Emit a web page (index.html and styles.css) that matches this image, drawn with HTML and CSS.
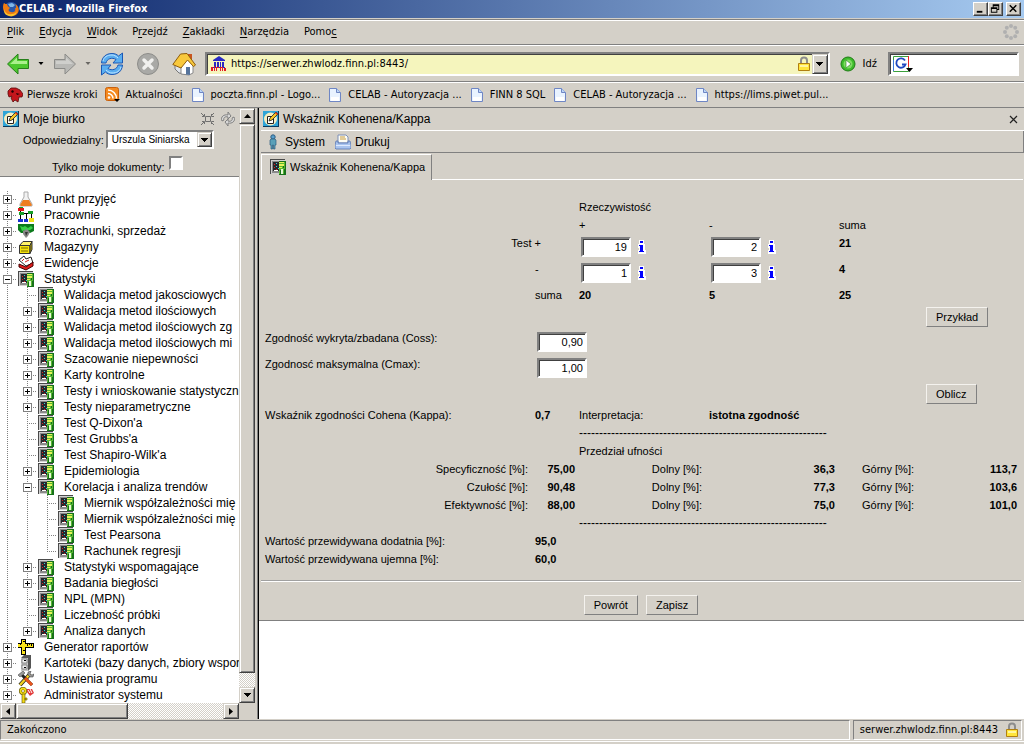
FILE: index.html
```html
<!DOCTYPE html>
<html lang="pl">
<head>
<meta charset="utf-8">
<title>CELAB - Mozilla Firefox</title>
<link rel="stylesheet" href="styles.css">
</head>
<body>
<svg class="sprite" aria-hidden="true">
  <symbol id="stat" viewBox="0 0 16 16" shape-rendering="crispEdges">
    <path fill="#4a4a4a" d="M0 0h15v1H0zM0 0h1v15H0z"/><path fill="#d0d0d0" d="M1 1h14v14H1z"/><path fill="#8a8a8a" d="M2 2h12v12H2z"/><path fill="#26282c" d="M3 3h6v9H3z"/>
    <path fill="#d22" d="M4 5h1v1H4zM4 8h1v1H4zM6 10h1v1H6z"/><path fill="#3bd0d8" d="M6 4h1v1H6zM6 7h1v1H6zM8 9h1v1H8z"/>
    <path fill="#fff" d="M4 11h4v1H4z"/><path fill="#17701b" d="M9 2h7v14H9z"/><path fill="#58b832" d="M9 3h6v12H9z"/>
    <path fill="#e6f25a" d="M9 3h5v1H9zM9 5h5v2H9zM9 8h3v1H9z"/><path fill="#e8f8d8" d="M11 10h2v5h-2z"/><path fill="#17701b" d="M13 7h1v2h-1zM14 10h1v5h-1zM10 11h1v4h-1z"/>
  </symbol>
  <symbol id="edit" viewBox="0 0 16 16">
    <path fill="#0a3a5c" d="M0 0h16v16H0z"/><path fill="#2fa5d8" d="M0 0h15v15H0z"/><circle cx="7.500" cy="8" r="6.500" fill="#f6edc0"/><path fill="#fff" stroke="#222" d="M4.500 5.500h6v7h-6z"/>
    <path d="M6 10l1-3 6-6 2 2-6 6z" fill="#f7c520" stroke="#222" stroke-width=".8"/><path d="M13 1l2 2-1 1-2-2z" fill="#d32"/>
  </symbol>
  <symbol id="page" viewBox="0 0 14 16">
    <path d="M1.500 1.500h7l4 4v9h-11z" fill="#e9f3ff" stroke="#6f86c4"/><path d="M8.500 1.500v4h4" fill="#bcd6f7" stroke="#6f86c4"/><path d="M3 10h8v4H3z" fill="#fff"/>
  </symbol>
  <symbol id="lock" viewBox="0 0 14 16">
    <path d="M4 8V4.500a3 3 0 0 1 6 0V8" fill="none" stroke="#8d8d8d" stroke-width="2"/><path d="M1.500 7.500h11v7h-11z" fill="#ffe53b" stroke="#b07f10"/><path d="M3 9h8v2H3z" fill="#fff6a0"/>
  </symbol>
  <symbol id="info" viewBox="0 0 8 14" shape-rendering="crispEdges"><path d="M1 0h5v4h1v6h1v4H0v-4h1V8H0V4h1z" fill="#fff"/><path d="M2 1h3v2H2zM1 5h4v6h1v1H1v-1h1V6H1z" fill="#00f"/></symbol>
  <symbol id="plus" viewBox="0 0 9 9" shape-rendering="crispEdges"><path fill="#808080" d="M0 0h9v9H0z"/><path fill="#fff" d="M1 1h7v7H1z"/><path d="M2 4h5v1H2zM4 2h1v5H4z"/></symbol>
  <symbol id="minus" viewBox="0 0 9 9" shape-rendering="crispEdges"><path fill="#808080" d="M0 0h9v9H0z"/><path fill="#fff" d="M1 1h7v7H1z"/><path d="M2 4h5v1H2z"/></symbol>
  <symbol id="down" viewBox="0 0 7 4" shape-rendering="crispEdges"><path d="M0 0h7v1H0zM1 1h5v1H1zM2 2h3v1H2zM3 3h1v1H3z"/></symbol>
</svg>

<header class="titlebar">
  <svg class="i16" viewBox="0 0 16 16"><circle cx="8" cy="8" r="7" fill="#2b57a8"/><path d="M5 3l4-1 3 2-2 2-3 0z" fill="#7fb6e8"/><path d="M1 2c1 1 2 1 3 1 0 2 2 3 3 4-2 1-2 4 1 4 3 1 5-1 4-4 2 1 1-3 0-4 4 2 5 7 2 10s-9 3-12-1S0 4 1 2z" fill="#ee7a12"/><path d="M1 8c1 4 4 6 8 5 3 0 5-2 5-4 0 5-4 7-8 6S1 12 1 8z" fill="#fbc22a"/></svg>
  <h1>CELAB - Mozilla Firefox</h1>
  <button class="win" aria-label="Minimalizuj"><svg viewBox="0 0 14 12"><path d="M3 8h6v2H3z"/></svg></button>
  <button class="win" aria-label="Przywróć"><svg viewBox="0 0 14 12"><path d="M4 1h7v6H9V6h1V3H5v1H4zM2 4h7v6H2zM3 6v3h5V6z" fill-rule="evenodd"/></svg></button>
  <button class="win close" aria-label="Zamknij"><svg viewBox="0 0 14 12"><path d="M3 2l7 7M10 2l-7 7" stroke="#000" stroke-width="1.600"/></svg></button>
</header>

<nav class="menubar">
  <a href="#"><u>P</u>lik</a><a href="#"><u>E</u>dycja</a><a href="#"><u>W</u>idok</a><a href="#">P<u>r</u>zejdź</a><a href="#"><u>Z</u>akładki</a><a href="#"><u>N</u>arzędzia</a><a href="#">Pomo<u>c</u></a>
  <svg class="throbber" viewBox="0 0 16 16" fill="#b0b0b0"><circle cx="8" cy="2" r="2"/><circle cx="12.200" cy="3.800" r="2"/><circle cx="14" cy="8" r="2"/><circle cx="12.200" cy="12.200" r="2"/><circle cx="8" cy="14" r="2"/><circle cx="3.800" cy="12.200" r="2"/><circle cx="2" cy="8" r="2"/><circle cx="3.800" cy="3.800" r="2"/></svg>
</nav>

<div class="toolbar">
  <button class="tool" aria-label="Wstecz"><svg class="i24" viewBox="0 0 24 24"><path d="M1.500 12L12 2v5.500h10.500v9H12V22z" fill="#4cc82e" stroke="#267f1a" stroke-linejoin="round"/><path d="M4 12l7-6.500V9h10v3z" fill="#aaf08c"/></svg></button>
  <svg class="caret" viewBox="0 0 5 3"><path d="M0 0h5L2.500 3z"/></svg>
  <button class="tool fwd" aria-label="Do przodu"><svg class="i24" viewBox="0 0 24 24"><path d="M22.500 12L12 2v5.500H1.500v9H12V22z" fill="#b9b9b6" stroke="#8b8b88" stroke-linejoin="round"/><path d="M20 12l-7-6.500V9H3v3z" fill="#cfcfcc"/></svg></button>
  <svg class="caret dim" viewBox="0 0 5 3"><path d="M0 0h5L2.500 3z"/></svg>
  <button class="tool" aria-label="Odśwież"><svg class="i24" viewBox="0 0 24 24"><path d="M1.500 11C2 5 6 1.500 12 1.500c3 0 5 1 6.500 2.500L22.500 1v10H13l3-3.500C12 5 7 6.500 6 11z" fill="#5aaef0" stroke="#1c58b4"/><path d="M3 9c1-4 4-6 9-6 2 0 4 1 6 3" fill="none" stroke="#bfe4ff"/><path d="M22.500 13C22 19 18 22.500 12 22.500c-3 0-5-1-6.500-2.500L1.500 23V13H11l-3 3.500c4 2.500 9 1 10-3.500z" fill="#5aaef0" stroke="#1c58b4"/><path d="M21 15c-1 4-4 6-9 6-2 0-4-1-6-3" fill="none" stroke="#bfe4ff"/></svg></button>
  <button class="tool stop" aria-label="Zatrzymaj"><svg class="i24" viewBox="0 0 24 24"><circle cx="12" cy="12" r="10.500" fill="#a9a9a6" stroke="#8c8c89"/><path d="M8 8l8 8M16 8l-8 8" stroke="#f0f0ee" stroke-width="3.500" stroke-linecap="round"/></svg></button>
  <button class="tool stop" aria-label="Strona startowa"><svg class="i24" viewBox="0 0 24 24"><path d="M3 12l5-6 5 7v9l-6-1-4-4z" fill="#dfe3ea" stroke="#777"/><path d="M16 2h4v6h-4z" fill="#c9551f"/><path d="M9 22V13l6-6 6 6v8l-4 2z" fill="#fff" stroke="#888"/><path d="M.8 12.500L8.500 2l6.500-.5L23.500 13l-2 1.500L15.500 8 9 16z" fill="#f8c83c" stroke="#8d5c0c" stroke-linejoin="round"/><path d="M14 15h4v8l-4-.5z" fill="#56749c"/></svg></button>
  <div class="urlbar">
    <svg class="i16" viewBox="0 0 16 16"><path d="M2 4l6-4 6 4v1H2zM3 6h2v5H3zM6 6h2v5H6zM9 6h1v5H9zM11 6h2v5h-2zM2 11h12v1H2z" fill="#2a2bc4"/><path d="M0 11h2v4H0zM3 10h1v5H3zM5 11h3v1H6v3H5zM9 11h3v4h-1v-3h-1v3H9zM13 12h2v3h-2z" fill="#e31b23"/></svg>
    <input type="text" aria-label="Adres" value="https://serwer.zhwlodz.finn.pl:8443/">
    <svg class="lock" viewBox="0 0 14 16"><use href="#lock"/></svg>
    <button class="raised drop" aria-label="Historia adresów"><svg class="arr" viewBox="0 0 7 4"><use href="#down"/></svg></button>
  </div>
  <button class="go"><svg class="i16" viewBox="0 0 16 16"><circle cx="8" cy="8" r="7" fill="#3dbb2c" stroke="#1f7c16"/><circle cx="8" cy="8" r="4.500" fill="#7fdc62"/><path d="M6 4l5 4-5 4z" fill="#fff" stroke="#1f7c16" stroke-width=".6"/></svg><span>Idź</span></button>
  <div class="search">
    <svg viewBox="0 0 22 18"><path d="M1.500 1.500h15v15h-15z" fill="#fff" stroke="#3ba03b"/><path d="M16.500 1v11" stroke="#e22"/><path d="M1.500 16V5" stroke="#3b78d8" fill="none"/><path d="M13 5.500A4.700 4.700 0 1 0 13.500 9.500H10" fill="none" stroke="#2149c0" stroke-width="1.800"/><path d="M14 13h7l-3.500 4z"/></svg>
    <input type="text" aria-label="Szukaj">
  </div>
</div>

<nav class="bookmarks">
  <a href="#"><svg class="i16" viewBox="0 0 16 16"><path d="M1 4l3-3 5 0 4 2 3 4-1 3-3 0-1 5-3-2-2 2-2-4 1-2-3 1-1-3z" fill="#c4161c" stroke="#5a0a0a" stroke-width=".8"/><path d="M4 4l2-1 1 2-2 1zM9 6l4 1-3 1z" fill="#200"/></svg>Pierwsze kroki</a>
  <a href="#"><svg class="i16" viewBox="0 0 16 16"><rect x=".5" y=".5" width="13" height="13" rx="2" fill="#f58a1f" stroke="#c9600c"/><circle cx="4" cy="10.500" r="1.300" fill="#fff"/><path d="M3 6.500a5 5 0 0 1 5 5M3 3a8.500 8.500 0 0 1 8.500 8.500" fill="none" stroke="#fff" stroke-width="1.500"/><path d="M9 12h6l-3 3z"/></svg>Aktualności</a>
  <a href="#"><svg class="pg"><use href="#page"/></svg>poczta.finn.pl - Logo...</a>
  <a href="#"><svg class="pg"><use href="#page"/></svg>CELAB - Autoryzacja ...</a>
  <a href="#"><svg class="pg"><use href="#page"/></svg>FINN 8 SQL</a>
  <a href="#"><svg class="pg"><use href="#page"/></svg>CELAB - Autoryzacja ...</a>
  <a href="#"><svg class="pg"><use href="#page"/></svg>https://lims.piwet.pul...</a>
</nav>

<div class="frames">
  <aside class="side">
    <div class="side-body">
      <form class="desk">
        <div class="desk-title"><svg class="i16"><use href="#edit"/></svg><h2>Moje biurko</h2>
          <svg class="i16 g" viewBox="0 0 16 16" fill="none" stroke="#707070"><path d="M5.500 5.500h5v5h-5zM1 2l3 3M14 2l-3 3M1 14l3-3M14 14l-3-3M2 5.500h2.500V3M14 5.500h-2.500V3M2 10.500h2.500V13M14 10.500h-2.500V13"/></svg>
          <svg class="i16 g" viewBox="0 0 16 16" fill="#d8d8d8" stroke="#808080"><path d="M2 10c-2-4 2-7 6-6V1l3 4-3 3V6C5 5 3 7 4 9zM14 6c2 4-2 7-6 6v3l-3-4 3-3v2c3 1 5-1 4-3z"/></svg>
        </div>
        <div class="desk-row"><label for="who">Odpowiedzialny:</label><span class="sel"><select id="who"><option>Urszula Siniarska</option></select><span class="raised selbtn"><svg class="arr" viewBox="0 0 7 4"><use href="#down"/></svg></span></span></div>
        <div class="desk-row check"><label for="mine">Tylko moje dokumenty:</label><input type="checkbox" id="mine"></div>
      </form>
      <ul class="tree">
        <li><div class="row"><span class="twig"><button aria-label="Rozwiń"><svg><use href="#plus"/></svg></button></span><svg class="i16" viewBox="0 0 16 16"><path d="M6 1h4v5l4 7v2H2v-2l4-7z" fill="#f2f2f2" stroke="#aaa"/><path d="M5 9h6l3 5-1 1H3l-1-1z" fill="#ee7e22"/></svg><a href="#">Punkt przyjęć</a></div></li>
        <li><div class="row"><span class="twig"><button aria-label="Rozwiń"><svg><use href="#plus"/></svg></button></span><svg class="i16" viewBox="0 0 16 16" shape-rendering="crispEdges"><path d="M2 3h1v9H2zM3 6h10v1H3zM8 6h1v6H8zM13 6h1v6h-1z"/><path d="M0 1h6v3H0z" fill="#e01818"/><path d="M1 0h4v1H1zM1 5h5v3H1zM10 4h5v3h-5z" fill="#18a028"/><path d="M0 12h5v3H0zM6 12h4v3H6z" fill="#1830d0"/><path d="M11 11h5v4h-5z" fill="#f0e018"/></svg><a href="#">Pracownie</a></div></li>
        <li><div class="row"><span class="twig"><button aria-label="Rozwiń"><svg><use href="#plus"/></svg></button></span><svg class="i16" viewBox="0 0 16 16"><path d="M0 1h16v7l-4 2H3L0 7z" fill="#0c7a1c"/><path d="M2 3l3 1 2-1 3 2 3-2 2 2-3 2-4 0-4 1z" fill="#39d048"/><path d="M5 8l4-2 3 3-2 4-2 2-3-4z" fill="#888"/><path d="M7 9l3 0-2 4z" fill="#333"/></svg><a href="#">Rozrachunki, sprzedaż</a></div></li>
        <li><div class="row"><span class="twig"><button aria-label="Rozwiń"><svg><use href="#plus"/></svg></button></span><svg class="i16" viewBox="0 0 16 16"><path d="M1.500 6.500L5 2.500h9l-2 4z" fill="#fff36a" stroke="#333"/><path d="M1.500 6.500H12v8H1.500z" fill="#f6e40c" stroke="#333"/><path d="M12 6.500l2-4v8l-2 4z" fill="#b09c04" stroke="#333"/><path d="M3 9h7M3 12h7" stroke="#7a6c00"/></svg><a href="#">Magazyny</a></div></li>
        <li><div class="row"><span class="twig"><button aria-label="Rozwiń"><svg><use href="#plus"/></svg></button></span><svg class="i16" viewBox="0 0 16 16"><path d="M1 5l5-4 2 3 5-2 2 6-7 3z" fill="#fff" stroke="#222"/><path d="M4 6l2-2M7 7l4-2" stroke="#c22"/><path d="M1 9l7 3 7-5v4l-7 4-7-3z" fill="#e01c1c" stroke="#400"/></svg><a href="#">Ewidencje</a></div></li>
        <li><div class="row"><span class="twig"><button aria-label="Zwiń"><svg><use href="#minus"/></svg></button></span><svg class="i16"><use href="#stat"/></svg><a href="#">Statystyki</a></div>
          <ul>
            <li><div class="row"><span class="twig"></span><svg class="i16"><use href="#stat"/></svg><a href="#">Walidacja metod jakosciowych</a></div></li>
            <li><div class="row"><span class="twig"><button aria-label="Rozwiń"><svg><use href="#plus"/></svg></button></span><svg class="i16"><use href="#stat"/></svg><a href="#">Walidacja metod ilościowych</a></div></li>
            <li><div class="row"><span class="twig"><button aria-label="Rozwiń"><svg><use href="#plus"/></svg></button></span><svg class="i16"><use href="#stat"/></svg><a href="#">Walidacja metod ilościowych zg</a></div></li>
            <li><div class="row"><span class="twig"><button aria-label="Rozwiń"><svg><use href="#plus"/></svg></button></span><svg class="i16"><use href="#stat"/></svg><a href="#">Walidacja metod ilościowych mi</a></div></li>
            <li><div class="row"><span class="twig"><button aria-label="Rozwiń"><svg><use href="#plus"/></svg></button></span><svg class="i16"><use href="#stat"/></svg><a href="#">Szacowanie niepewności</a></div></li>
            <li><div class="row"><span class="twig"><button aria-label="Rozwiń"><svg><use href="#plus"/></svg></button></span><svg class="i16"><use href="#stat"/></svg><a href="#">Karty kontrolne</a></div></li>
            <li><div class="row"><span class="twig"><button aria-label="Rozwiń"><svg><use href="#plus"/></svg></button></span><svg class="i16"><use href="#stat"/></svg><a href="#">Testy i wnioskowanie statystyczn</a></div></li>
            <li><div class="row"><span class="twig"><button aria-label="Rozwiń"><svg><use href="#plus"/></svg></button></span><svg class="i16"><use href="#stat"/></svg><a href="#">Testy nieparametryczne</a></div></li>
            <li><div class="row"><span class="twig"></span><svg class="i16"><use href="#stat"/></svg><a href="#">Test Q-Dixon'a</a></div></li>
            <li><div class="row"><span class="twig"></span><svg class="i16"><use href="#stat"/></svg><a href="#">Test Grubbs'a</a></div></li>
            <li><div class="row"><span class="twig"></span><svg class="i16"><use href="#stat"/></svg><a href="#">Test Shapiro-Wilk'a</a></div></li>
            <li><div class="row"><span class="twig"><button aria-label="Rozwiń"><svg><use href="#plus"/></svg></button></span><svg class="i16"><use href="#stat"/></svg><a href="#">Epidemiologia</a></div></li>
            <li><div class="row"><span class="twig"><button aria-label="Zwiń"><svg><use href="#minus"/></svg></button></span><svg class="i16"><use href="#stat"/></svg><a href="#">Korelacja i analiza trendów</a></div>
              <ul>
                <li><div class="row"><span class="twig"></span><svg class="i16"><use href="#stat"/></svg><a href="#">Miernik współzależności mię</a></div></li>
                <li><div class="row"><span class="twig"></span><svg class="i16"><use href="#stat"/></svg><a href="#">Miernik współzależności mię</a></div></li>
                <li><div class="row"><span class="twig"></span><svg class="i16"><use href="#stat"/></svg><a href="#">Test Pearsona</a></div></li>
                <li><div class="row"><span class="twig last"></span><svg class="i16"><use href="#stat"/></svg><a href="#">Rachunek regresji</a></div></li>
              </ul>
            </li>
            <li><div class="row"><span class="twig"><button aria-label="Rozwiń"><svg><use href="#plus"/></svg></button></span><svg class="i16"><use href="#stat"/></svg><a href="#">Statystyki wspomagające</a></div></li>
            <li><div class="row"><span class="twig"><button aria-label="Rozwiń"><svg><use href="#plus"/></svg></button></span><svg class="i16"><use href="#stat"/></svg><a href="#">Badania biegłości</a></div></li>
            <li><div class="row"><span class="twig"></span><svg class="i16"><use href="#stat"/></svg><a href="#">NPL (MPN)</a></div></li>
            <li><div class="row"><span class="twig"></span><svg class="i16"><use href="#stat"/></svg><a href="#">Liczebność próbki</a></div></li>
            <li><div class="row"><span class="twig last"><button aria-label="Rozwiń"><svg><use href="#plus"/></svg></button></span><svg class="i16"><use href="#stat"/></svg><a href="#">Analiza danych</a></div></li>
          </ul>
        </li>
        <li><div class="row"><span class="twig"><button aria-label="Rozwiń"><svg><use href="#plus"/></svg></button></span><svg class="i16" viewBox="0 0 16 16" shape-rendering="crispEdges"><path d="M3 0h5v16H3zM0 4h16v5H0z"/><path d="M4 1h3v14H4zM0 5h15v3H0z" fill="#fbe41a"/><path d="M2 5h1v1H2zM9 5h1v2H9zM11 5h1v1h-1zM13 5h1v2h-1zM5 11h2v1H5zM5 2h2v1H5z"/></svg><a href="#">Generator raportów</a></div></li>
        <li><div class="row"><span class="twig"><button aria-label="Rozwiń"><svg><use href="#plus"/></svg></button></span><svg class="i16" viewBox="0 0 16 16"><path d="M3 3l3-3h7v13l-3 3H3z" fill="#555"/><path d="M3 3h7v13H3z" fill="#c6c6c6"/><path d="M4 4h5v4H4zM4 10h5v4H4z" fill="#eee" stroke="#666" stroke-width=".7"/><path d="M6 5h2v1H6zM6 12h2v1H6z"/></svg><a href="#">Kartoteki (bazy danych, zbiory wspor</a></div></li>
        <li><div class="row"><span class="twig"><button aria-label="Rozwiń"><svg><use href="#plus"/></svg></button></span><svg class="i16" viewBox="0 0 16 16"><path d="M2 14L12 3" stroke="#222" stroke-width="4"/><path d="M2 14L12 3" stroke="#f0d020" stroke-width="2.500"/><path d="M4 4l10 10" stroke="#222" stroke-width="3"/><path d="M7 7l7 7" stroke="#e8541c" stroke-width="3"/><path d="M0 4l5-4 2 2-5 4zM10 1l3-1-1 3 2 1 2-1-1 3-3 0-2-2z" fill="#999" stroke="#333" stroke-width=".5"/></svg><a href="#">Ustawienia programu</a></div></li>
        <li><div class="row"><span class="twig"><button aria-label="Rozwiń"><svg><use href="#plus"/></svg></button></span><svg class="i16" viewBox="0 0 16 16"><circle cx="5" cy="4" r="2.500" fill="#fff" stroke="#5a4e00" stroke-width="3"/><circle cx="5" cy="4" r="2.500" fill="none" stroke="#f4dc18" stroke-width="1.800"/><path d="M4 7h3v9H4zM7 11h2v2H7z" fill="#f4dc18" stroke="#5a4e00" stroke-width=".6"/><path d="M9 2l5 0 2 4-4 3-3-4z" fill="#e23a3a"/><path d="M10 3l2 3M12 2l2 4" stroke="#fff"/></svg><a href="#">Administrator systemu</a></div></li>
      </ul>
      <div class="hscroll"><button class="raised sb" aria-label="W lewo"><svg class="arr v" viewBox="0 0 4 7"><path d="M4 0v7L0 3.500z"/></svg></button><span class="raised hthumb"></span><span class="grow"></span><button class="raised sb" aria-label="W prawo"><svg class="arr v" viewBox="0 0 4 7"><path d="M0 0v7l4-3.500z"/></svg></button></div>
    </div>
    <div class="vscroll"><button class="raised sb" aria-label="W górę"><svg class="arr" viewBox="0 0 7 4"><path d="M0 4h7L3.500 0z"/></svg></button><span class="raised vthumb"></span><span class="vrest"></span><button class="raised sb" aria-label="W dół"><svg class="arr" viewBox="0 0 7 4"><use href="#down"/></svg></button><span class="corner"></span></div>
  </aside>

  <main class="main">
    <div class="panel">
      <div class="head"><svg class="i16"><use href="#edit"/></svg><h2>Wskaźnik Kohenena/Kappa</h2><button class="x" aria-label="Zamknij"><svg viewBox="0 0 9 9"><path d="M1 1l7 7M8 1L1 8" stroke="#222" stroke-width="1.200"/></svg></button></div>
      <div class="cmds">
        <button><svg class="i16" viewBox="0 0 16 16"><circle cx="8" cy="3" r="2.200" fill="#5aa0cc" stroke="#2c5c80"/><path d="M6 5h4l1 1v5h-1v4H8.500v-4h-1v4H6v-4H5V6z" fill="#5aa0b8" stroke="#2c5c80" stroke-width=".7"/></svg>System</button>
        <button><svg class="i16" viewBox="0 0 16 16"><path d="M3 1h8l2 2v6H3z" fill="#fdfdf4" stroke="#7d8fb8"/><path d="M5 3h5M5 5h6" stroke="#c79a3a"/><path d="M1 7h2v2h10V7h2l1 4v3l-1 1H1l-1-1v-3z" fill="#a9c4ee" stroke="#5674b0" stroke-width=".8"/><path d="M1 11h14v1H1z" fill="#dfeaff"/></svg>Drukuj</button>
      </div>
      <div class="tabs"><a href="#" class="tab"><svg class="i16"><use href="#stat"/></svg>Wskaźnik Kohenena/Kappa</a><span class="tabfill"></span></div>
      <form>
        <table class="calc">
          <colgroup><col><col class="cb"><col class="cc"><col class="cc"><col class="ce"><col class="cf"></colgroup>
          <tr><td></td><td></td><td>Rzeczywistość</td></tr>
          <tr><td></td><td></td><td>+</td><td>-</td><td>suma</td></tr>
          <tr class="in"><td class="r wide" colspan="2">Test +</td><td><span class="fld"><input type="text" value="19" aria-label="Test +, rzeczywistość +"><svg class="inf"><use href="#info"/></svg></span></td><td><span class="fld"><input type="text" value="2" aria-label="Test +, rzeczywistość -"><svg class="inf"><use href="#info"/></svg></span></td><td><b>21</b></td></tr>
          <tr class="in"><td></td><td>-</td><td><span class="fld"><input type="text" value="1" aria-label="Test -, rzeczywistość +"><svg class="inf"><use href="#info"/></svg></span></td><td><span class="fld"><input type="text" value="3" aria-label="Test -, rzeczywistość -"><svg class="inf"><use href="#info"/></svg></span></td><td><b>4</b></td></tr>
          <tr><td></td><td>suma</td><td><b>20</b></td><td><b>5</b></td><td><b>25</b></td></tr>
          <tr class="act"><td colspan="5"></td><td><button type="button" class="btn">Przykład</button></td></tr>
          <tr class="in"><td><label for="coss">Zgodność wykryta/zbadana (Coss):</label></td><td colspan="2"><span class="fld"><input type="text" id="coss" value="0,90"></span></td></tr>
          <tr class="in"><td><label for="cmax">Zgodnosć maksymalna (Cmax):</label></td><td colspan="2"><span class="fld"><input type="text" id="cmax" value="1,00"></span></td></tr>
          <tr class="act"><td colspan="5"></td><td><button type="button" class="btn">Oblicz</button></td></tr>
          <tr><td>Wskaźnik zgodności Cohena (Kappa):</td><td><b>0,7</b></td><td>Interpretacja:</td><td><b>istotna zgodność</b></td></tr>
          <tr><td></td><td></td><td colspan="2" class="dash">--------------------------------------------------------------</td></tr>
          <tr><td></td><td></td><td>Przedział ufności</td></tr>
          <tr><td class="r">Specyficzność [%]:</td><td class="n">75,00</td><td class="r">Dolny [%]:</td><td class="n">36,3</td><td class="r">Górny [%]:</td><td class="n">113,7</td></tr>
          <tr><td class="r">Czułość [%]:</td><td class="n">90,48</td><td class="r">Dolny [%]:</td><td class="n">77,3</td><td class="r">Górny [%]:</td><td class="n">103,6</td></tr>
          <tr><td class="r">Efektywność [%]:</td><td class="n">88,00</td><td class="r">Dolny [%]:</td><td class="n">75,0</td><td class="r">Górny [%]:</td><td class="n">101,0</td></tr>
          <tr><td></td><td></td><td colspan="2" class="dash">--------------------------------------------------------------</td></tr>
          <tr><td>Wartość przewidywana dodatnia [%]:</td><td><b>95,0</b></td></tr>
          <tr><td>Wartość przewidywana ujemna [%]:</td><td><b>60,0</b></td></tr>
        </table>
        <div class="foot"><button type="button" class="btn">Powrót</button><button type="button" class="btn">Zapisz</button></div>
      </form>
    </div>
  </main>
</div>

<footer class="status"><span class="cell msg">Zakończono</span><span class="cell host">serwer.zhwlodz.finn.pl:8443<svg class="lock" viewBox="0 0 14 16"><use href="#lock"/></svg></span></footer>
</body>
</html>
```
FILE: styles.css
```css
* { box-sizing: border-box; }
body {
  margin: 0; height: 100vh; display: flex; flex-direction: column;
  background: #d4d0c8; color: #000; overflow: hidden;
  font: 11px/14px "DejaVu Sans Condensed", "Noto Sans", sans-serif;
}
svg { display: block; flex: none; }
a { color: inherit; text-decoration: none; }
h1, h2 { margin: 0; font-size: inherit; font-weight: normal; }
button { margin: 0; padding: 0; border: 0; background: none; color: inherit; font: inherit; display: block; }
input, select { font: inherit; color: inherit; margin: 0; border-radius: 0; }
ul { list-style: none; margin: 0; padding: 0; }
.sprite { position: absolute; width: 0; height: 0; }
.i16 { width: 16px; height: 16px; }
.i24 { width: 24px; height: 24px; }
.arr { width: 7px; height: 4px; }
.arr.v { width: 4px; height: 7px; }
.raised {
  background: #d4d0c8; border: 1px solid; border-color: #d4d0c8 #404040 #404040 #d4d0c8;
  box-shadow: inset 1px 1px #fff, inset -1px -1px #808080;
  display: flex; align-items: center; justify-content: center; flex: none;
}

.titlebar {
  flex: none; height: 18px; display: flex; align-items: center; padding: 0 3px;
  background: linear-gradient(to right, #0a246a, #a6caf0); color: #fff;
}
.titlebar h1 { flex: 1; font-weight: bold; }
.win {
  width: 15px; height: 14px; background: #d4d0c8; border: 1px solid; border-color: #fff #404040 #404040 #fff;
  box-shadow: inset -1px -1px #808080;
}
.win svg { width: 13px; height: 12px; }
.win.close { margin-left: 3px; }

.menubar {
  flex: none; height: 26px; margin-top: 1px; padding: 0 5px 0 7px; display: flex; align-items: center; gap: 15px;
  border-top: 1px solid #808080; border-bottom: 1px solid #808080; box-shadow: inset 0 1px #fff;
}
.menubar u { text-underline-offset: 2px; }
.throbber { width: 16px; height: 16px; margin-left: auto; }

.toolbar {
  flex: none; height: 37px; padding: 0 5px 0 6px; display: flex; align-items: center;
  border-top: 1px solid #fff; border-bottom: 1px solid #808080;
}
.caret { width: 6px; height: 3px; margin: 0 9px 0 8px; }
.caret.dim { opacity: .5; }
.tool.stop { margin-left: 12px; }
.urlbar, .search {
  display: flex; align-items: center; height: 24px; padding-left: 4px; border: 2px solid;
  border-color: #808080 #fff #fff #808080; box-shadow: inset 1px 1px #404040;
}
.urlbar { flex: 1; margin-left: 9px; background: #f5f5bd; gap: 4px; }
.urlbar input, .search input { flex: 1; min-width: 0; border: 0; background: none; padding: 0; outline: 0; }
.lock { width: 14px; height: 16px; }
.drop { width: 16px; height: 20px; margin-left: -3px; }
.go { display: flex; align-items: center; gap: 7px; margin: 0 11px 0 10px; }
.search { width: 131px; background: #fff; padding-left: 2px; }
.search svg { width: 22px; height: 18px; }

.bookmarks {
  flex: none; height: 26px; padding: 0 7px; display: flex; align-items: center; gap: 8px;
  border-top: 1px solid #fff; border-bottom: 1px solid #808080; white-space: nowrap;
}
.bookmarks a { display: flex; align-items: center; gap: 4px; }
.pg { width: 14px; height: 16px; margin-right: 2px; }

.frames { flex: 1; min-height: 0; display: flex; font-family: "Liberation Sans", Arial, sans-serif; }
.side { flex: none; width: 258px; display: flex; }
.side-body { flex: 1; min-width: 0; display: flex; flex-direction: column; }
.desk { flex: none; height: 69px; border-bottom: 1px solid #808080; }
.desk-title { display: flex; align-items: center; height: 22px; padding: 0 3px; gap: 4px; font-size: 12px; }
.desk-title h2 { flex: 1; }
.desk-row { display: flex; align-items: center; padding-left: 23px; gap: 2px; }
.sel { display: flex; align-items: center; width: 108px; height: 19px; background: #fff; border: 2px solid; border-color: #808080 #fff #fff #808080; }
.sel select { flex: 1; min-width: 0; appearance: none; border: 0; background: none; padding: 0 0 0 4px; font-size: 10px; outline: 0; }
.selbtn { width: 15px; height: 15px; }
.check { padding: 7px 0 0 52px; gap: 4px; align-items: flex-start; }
.check label { padding-top: 4px; }
.check input { appearance: none; width: 14px; height: 14px; background: #fff; border: 2px solid; border-color: #808080 #fff #fff #808080; }

.tree { flex: 1; min-height: 0; overflow: hidden; background: #fff; padding-top: 14px; font-size: 12px; white-space: nowrap; }
.tree ul { padding-left: 20px; background: repeating-linear-gradient(#808080 0 1px, #fff 1px 2px) 7px 0 / 1px 100% no-repeat; }
.row { display: flex; align-items: center; height: 16px; }
.row a { padding-left: 10px; }
.twig {
  flex: none; width: 18px; height: 16px; padding: 4px 0 0 3px;
  background:
    repeating-linear-gradient(to right, #808080 0 1px, #fff 1px 2px) 7px 8px / 10px 1px no-repeat,
    repeating-linear-gradient(#808080 0 1px, #fff 1px 2px) 7px 0 / 1px 100% no-repeat;
}
.twig.last { background-size: 10px 1px, 1px 9px; }
.twig button, .twig svg { width: 9px; height: 9px; }

.sb { width: 16px; height: 16px; }
.hscroll { flex: none; height: 16px; display: flex; }
.hthumb { width: 112px; }
.grow { flex: 1; }
.grow, .vrest { background: repeating-conic-gradient(#fff 0 25%, #d4d0c8 0 50%) 0 0 / 2px 2px; }
.vscroll { width: 16px; margin-right: 3px; flex: none; display: flex; flex-direction: column; }
.vthumb { flex: 1; }
.vrest { height: 14px; }
.corner { height: 16px; }

.main { flex: 1; min-width: 0; background: #fff; border-left: 1px solid #000; box-shadow: -1px 0 #808080; }
.panel { background: #d4d0c8; border-bottom: 1px solid #808080; padding-left: 2px; }
.head { height: 23px; display: flex; align-items: center; gap: 4px; padding: 0 6px 0 2px; font-size: 12px; border-bottom: 1px solid #fff; }
.head h2 { flex: 1; }
.x svg { width: 9px; height: 9px; }
.cmds { height: 22px; display: flex; align-items: center; gap: 10px; padding-left: 4px; font-size: 12px; border-bottom: 1px solid #808080; border-right: 1px solid #808080; }
.cmds button { display: flex; align-items: center; gap: 4px; }
.tabs { display: flex; height: 26px; margin-top: 1px; margin-right: 1px; }
.tab { display: flex; align-items: center; gap: 4px; padding: 0 6px 2px 8px; border: solid; border-width: 1px 1px 0; border-color: #fff #808080 #fff #fff; }
.tabfill { flex: 1; border-bottom: 1px solid #fff; }

.calc { width: 100%; table-layout: fixed; border-spacing: 4px 0; margin-top: 18px; padding-right: 3px; font-size: 11px; line-height: 18px; }
.calc td { padding: 0; height: 18px; vertical-align: top; white-space: nowrap; }
.calc .r { text-align: right; padding-right: 3px; }
.calc .wide { padding-right: 34px; }
.calc .n { text-align: right; font-weight: bold; }
.calc .dash { font-size: 12px; }
.cb { width: 40px; }
.cc { width: 126px; }
.ce { width: 78px; }
.cf { width: 96px; }
.calc .in td { height: 26px; }
.calc .act td { height: 25px; padding: 3px 0 0 5px; }
.fld { display: flex; align-items: center; gap: 7px; padding: 3px 0 3px 2px; }
.fld input { width: 50px; height: 20px; padding: 0 2px 0 0; text-align: right; background: #fff; border: 2px solid; border-color: #808080 #fff #fff #808080; box-shadow: inset 1px 1px #404040; }
.inf { width: 8px; height: 14px; }
.btn { height: 20px; padding: 0 9px; line-height: 18px; background: #d4d0c8; border: 1px solid; border-color: #f4f2ee #808080 #808080 #f4f2ee; }
.foot { display: flex; justify-content: center; gap: 8px; margin: 12px 3px 0 0; padding: 14px 0 5px; border-top: 1px solid #a0a0a0; box-shadow: inset 0 1px #fff; }

.status { flex: none; height: 25px; padding: 1px 2px 4px 0; display: flex; gap: 3px; box-shadow: inset 0 -2px #d4d0c8, inset 0 -3px #fff; }
.cell { display: flex; align-items: center; padding-left: 6px; border: 1px solid; border-color: #808080 #fff #fff #808080; }
.msg { flex: 1; }
.host { gap: 7px; padding-right: 2px; }
```
